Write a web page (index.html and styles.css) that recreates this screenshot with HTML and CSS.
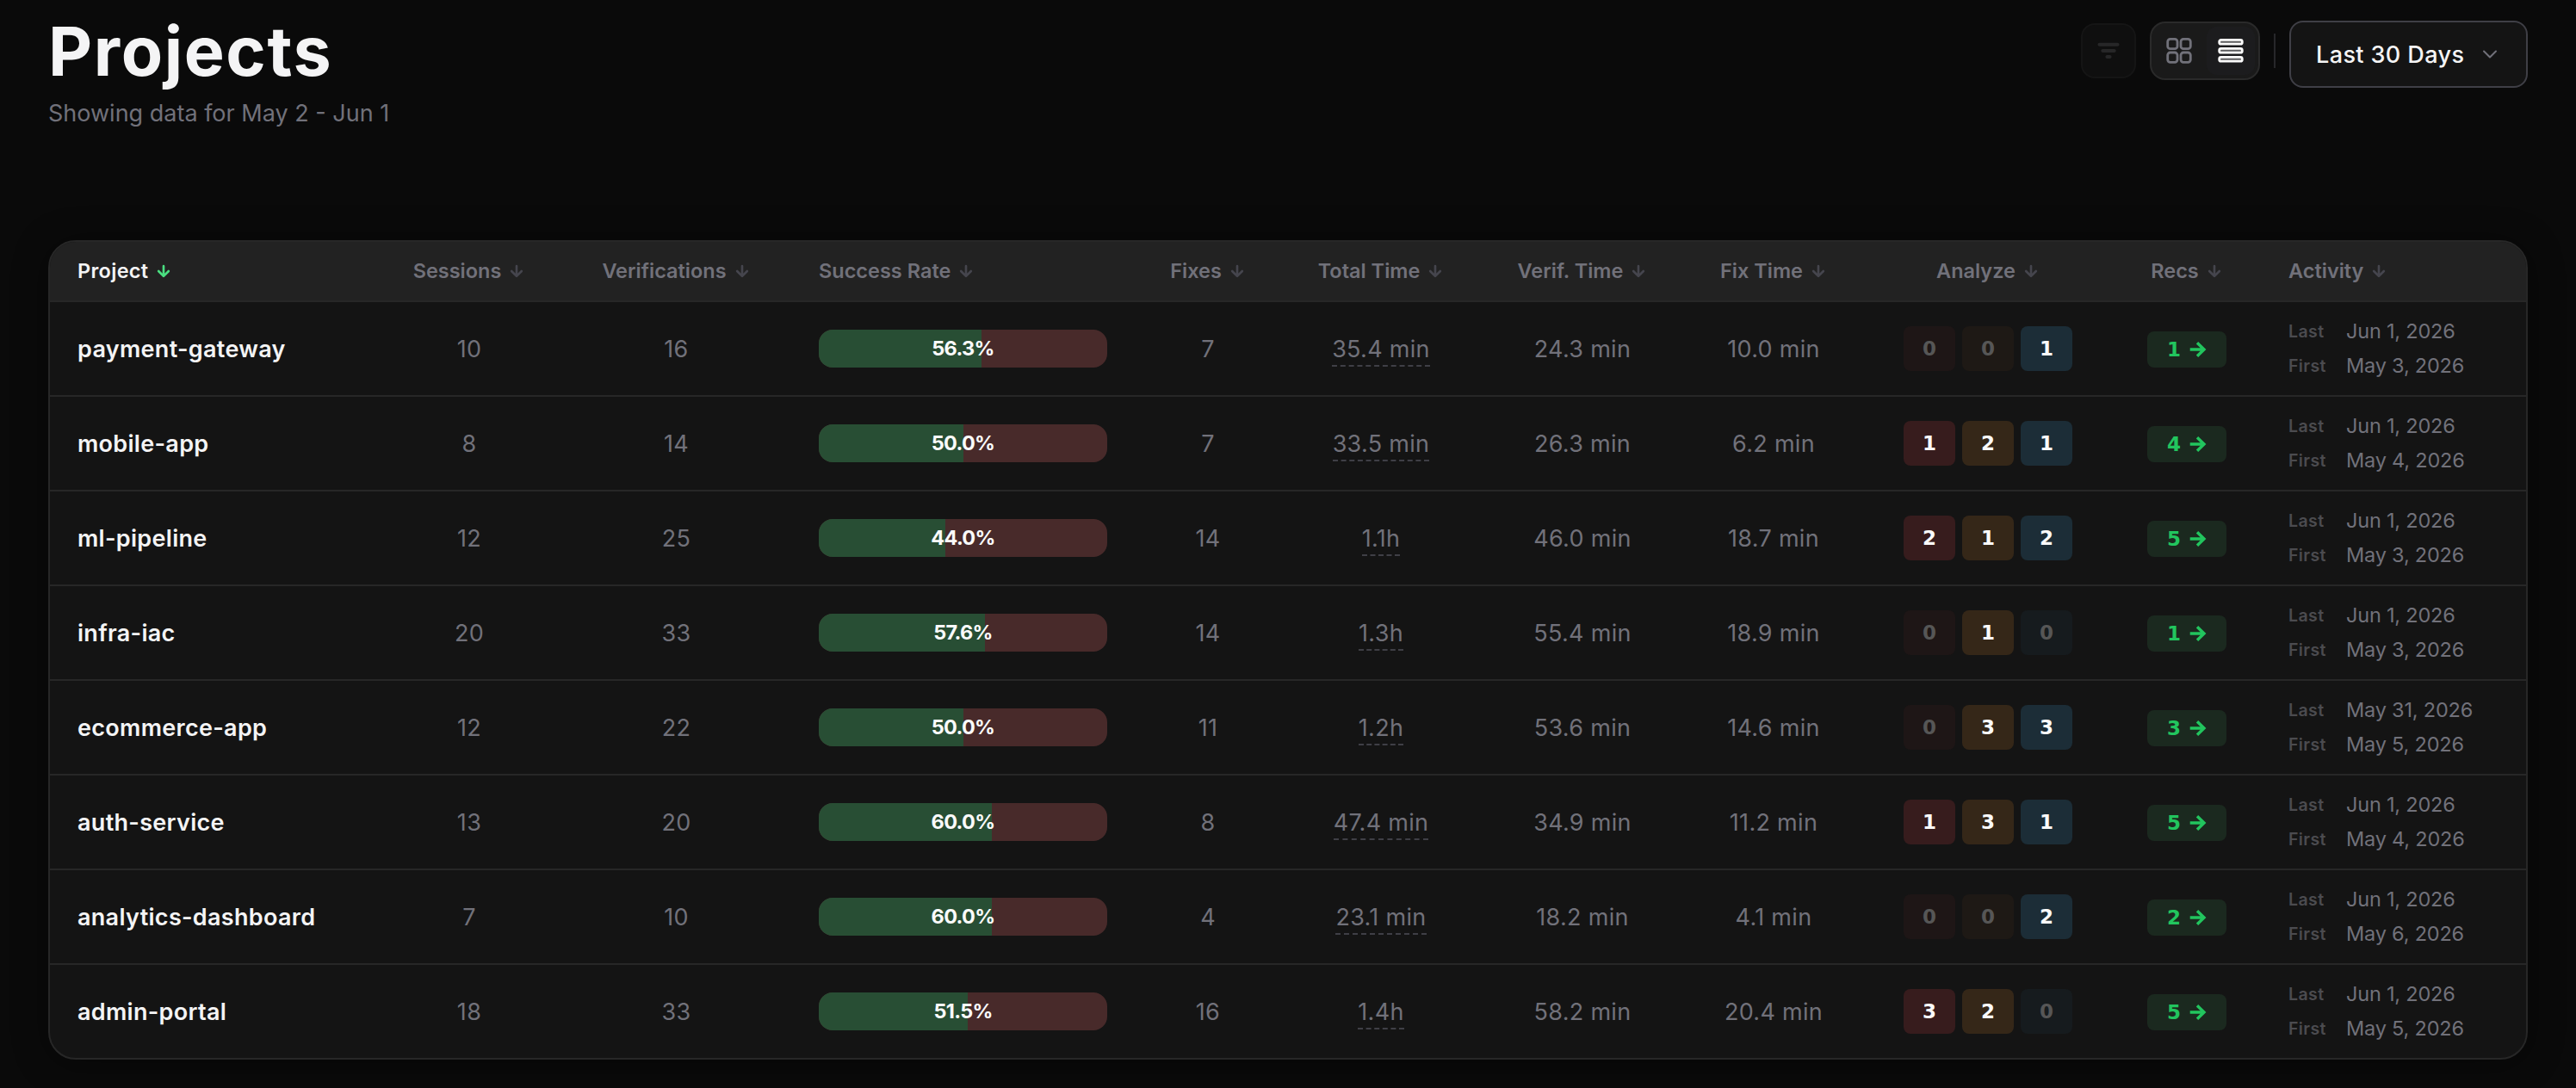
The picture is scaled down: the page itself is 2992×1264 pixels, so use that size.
FILE: index.html
```html
<!DOCTYPE html>
<html lang="en">
<head>
    <meta charset="UTF-8">
    <title>Projects</title>
    <link rel="stylesheet" href="styles.css">
</head>
<body>

<div class="page-header">
    <div>
        <h1>Projects</h1>
        <p class="subtitle">Showing data for May 2 - Jun 1</p>
    </div>
    <div class="toolbar">
        <div class="toolbar-group">
            <button class="filter-btn">
                <svg width="28" height="28" viewBox="0 0 28 28"><path d="M3.5 6.7h21M7.3 14h13.4M12.4 21h3.2"/></svg>
            </button>
            <div class="view-toggle">
                <button>
                    <svg width="32" height="32" viewBox="0 0 32 32">
                        <rect x="2.7" y="2.4" width="11.3" height="11.3" rx="3"/>
                        <rect x="18" y="2.4" width="11.3" height="11.3" rx="3"/>
                        <rect x="2.7" y="18" width="11.3" height="11.3" rx="3"/>
                        <rect x="18" y="18" width="11.3" height="11.3" rx="3"/>
                    </svg>
                </button>
                <button class="active">
                    <svg width="32" height="32" viewBox="0 0 32 32">
                        <rect x="2.7" y="3.4" width="26.6" height="4.8" rx="2"/>
                        <rect x="2.7" y="13.4" width="26.6" height="4.8" rx="2"/>
                        <rect x="2.7" y="23.4" width="26.6" height="4.8" rx="2"/>
                    </svg>
                </button>
            </div>
            <div class="separator"></div>
        </div>
        <button class="range-select">
            Last 30 Days
            <svg width="28" height="28" viewBox="0 0 24 24"><path d="m6 9 6 6 6-6"/></svg>
        </button>
    </div>
</div>

<div class="table-card">
    <table id="projects-table">
        <colgroup>
            <col class="c-project"><col class="c-sessions"><col class="c-verifications"><col class="c-rate"><col class="c-fixes">
            <col class="c-total"><col class="c-verif"><col class="c-fix"><col class="c-analyze"><col class="c-recs"><col class="c-activity">
        </colgroup>
        <thead>
            <tr>
                <th class="left sorted">Project</th>
                <th>Sessions</th>
                <th>Verifications</th>
                <th class="left">Success Rate</th>
                <th>Fixes</th>
                <th>Total Time</th>
                <th>Verif. Time</th>
                <th>Fix Time</th>
                <th>Analyze</th>
                <th>Recs</th>
                <th class="left">Activity</th>
            </tr>
        </thead>
        <tbody></tbody>
    </table>
</div>

<script>
    const projects = [
        { name: "payment-gateway", sessions: 10, verifications: 16, rate: "56.3", fixes: 7, total: "35.4 min", verif: "24.3 min", fix: "10.0 min", analyze: [0, 0, 1], recs: 1, last: "Jun 1, 2026", first: "May 3, 2026" },
        { name: "mobile-app", sessions: 8, verifications: 14, rate: "50.0", fixes: 7, total: "33.5 min", verif: "26.3 min", fix: "6.2 min", analyze: [1, 2, 1], recs: 4, last: "Jun 1, 2026", first: "May 4, 2026" },
        { name: "ml-pipeline", sessions: 12, verifications: 25, rate: "44.0", fixes: 14, total: "1.1h", verif: "46.0 min", fix: "18.7 min", analyze: [2, 1, 2], recs: 5, last: "Jun 1, 2026", first: "May 3, 2026" },
        { name: "infra-iac", sessions: 20, verifications: 33, rate: "57.6", fixes: 14, total: "1.3h", verif: "55.4 min", fix: "18.9 min", analyze: [0, 1, 0], recs: 1, last: "Jun 1, 2026", first: "May 3, 2026" },
        { name: "ecommerce-app", sessions: 12, verifications: 22, rate: "50.0", fixes: 11, total: "1.2h", verif: "53.6 min", fix: "14.6 min", analyze: [0, 3, 3], recs: 3, last: "May 31, 2026", first: "May 5, 2026" },
        { name: "auth-service", sessions: 13, verifications: 20, rate: "60.0", fixes: 8, total: "47.4 min", verif: "34.9 min", fix: "11.2 min", analyze: [1, 3, 1], recs: 5, last: "Jun 1, 2026", first: "May 4, 2026" },
        { name: "analytics-dashboard", sessions: 7, verifications: 10, rate: "60.0", fixes: 4, total: "23.1 min", verif: "18.2 min", fix: "4.1 min", analyze: [0, 0, 2], recs: 2, last: "Jun 1, 2026", first: "May 6, 2026" },
        { name: "admin-portal", sessions: 18, verifications: 33, rate: "51.5", fixes: 16, total: "1.4h", verif: "58.2 min", fix: "20.4 min", analyze: [3, 2, 0], recs: 5, last: "Jun 1, 2026", first: "May 5, 2026" }
    ];

    // Sort arrow in every header cell
    document.querySelectorAll("#projects-table th").forEach(th => {
        th.innerHTML = `<span class="th-label">${th.textContent}<svg width="20" height="20" viewBox="0 0 24 24"><path d="M12 5v14M19 12l-7 7-7-7"/></svg></span>`;
    });

    const levels = ["high", "medium", "low"];
    const tableBody = document.querySelector("#projects-table tbody");

    projects.forEach(p => {
        const row = document.createElement("tr");
        row.innerHTML = `
            <td class="name">${p.name}</td>
            <td>${p.sessions}</td>
            <td>${p.verifications}</td>
            <td><div class="rate-bar"><div class="rate-fill" style="width: ${p.rate}%"></div><span class="rate-text">${p.rate}%</span></div></td>
            <td>${p.fixes}</td>
            <td><span class="total">${p.total}</span></td>
            <td>${p.verif}</td>
            <td>${p.fix}</td>
            <td><div class="counts">${p.analyze.map((n, i) => `<span class="count ${levels[i]}${n ? "" : " empty"}">${n}</span>`).join("")}</div></td>
            <td><a class="recs">${p.recs}<svg width="20" height="18" viewBox="0 0 20 18"><path d="M0.7 9h16M9 1.2 17 9l-8 7.8"/></svg></a></td>
            <td><div class="activity"><span class="label">Last</span><span>${p.last}</span><span class="label">First</span><span>${p.first}</span></div></td>
        `;
        tableBody.appendChild(row);
    });
</script>

</body>
</html>
```
FILE: styles.css
```css
* {
    box-sizing: border-box;
}
body {
    margin: 0;
    padding: 19px 56px 0;
    height: 1264px;
    overflow: hidden;
    background-color: #0a0a0a;
    color: #71717a;
    font-family: Inter, "Liberation Sans", sans-serif;
    font-size: 27px;
}
button {
    display: flex;
    align-items: center;
    justify-content: center;
    padding: 0;
    border: none;
    background: none;
    color: inherit;
    font: inherit;
    cursor: pointer;
}
svg {
    display: block;
    flex: none;
    fill: none;
    stroke: currentColor;
    stroke-linecap: round;
    stroke-linejoin: round;
}

/* Header */
.page-header {
    display: flex;
    justify-content: space-between;
    height: 133px;
    margin-bottom: 127px;
}
h1 {
    margin: 0 0 13px;
    color: #f4f4f5;
    font-size: 79px;
    font-weight: 700;
    line-height: 80px;
    letter-spacing: 1.6px;
}
.subtitle {
    margin: 0;
    line-height: 40px;
}
.toolbar {
    display: flex;
    align-items: flex-start;
    gap: 16px;
    padding-top: 5px;
}
.toolbar-group {
    display: flex;
    align-items: center;
    gap: 16px;
    height: 70px;
}
.filter-btn {
    width: 64px;
    height: 64px;
    border: 2px solid #151515;
    border-radius: 16px;
    background-color: #0f0f0f;
    color: #272728;
}
.filter-btn svg {
    stroke-width: 4;
}
.view-toggle {
    display: flex;
    gap: 4px;
    padding: 4px;
    border: 2px solid #2a2a2a;
    border-radius: 18px;
    background-color: #1a1a1a;
}
.view-toggle button {
    width: 56px;
    height: 56px;
    border-radius: 12px;
}
.view-toggle svg {
    stroke-width: 2.8;
}
.view-toggle .active {
    background-color: #1c1c1e;
    color: #fafafa;
}
.view-toggle .active svg {
    fill: #5c5c5e;
}
.separator {
    width: 2px;
    height: 40px;
    background-color: #27272a;
}
.range-select {
    justify-content: space-between;
    width: 277px;
    height: 78px;
    padding: 0 28px 0 29px;
    border: 2px solid #3f3f46;
    border-radius: 16px;
    background-color: #141414;
    color: #f4f4f5;
    font-weight: 500;
    letter-spacing: 0.4px;
}
.range-select svg {
    color: #71717a;
    stroke-width: 1.7;
}

/* Table */
.table-card {
    overflow: hidden;
    border: 2px solid #272727;
    border-radius: 32px;
    background-color: #141414;
    box-shadow: 0 4px 40px rgba(0, 0, 0, 0.4);
}
table {
    width: 100%;
    table-layout: fixed;
    border-collapse: separate;
    border-spacing: 0;
}
.c-project { width: 380px; }
.c-sessions { width: 214px; }
.c-verifications { width: 267px; }
.c-rate { width: 399px; }
.c-fixes { width: 170px; }
.c-total { width: 232px; }
.c-verif { width: 236px; }
.c-fix { width: 208px; }
.c-analyze { width: 290px; }
.c-recs { width: 172px; }
.c-activity { width: 308px; }

th, td {
    padding: 0 32px;
    border-bottom: 2px solid #272727;
    text-align: center;
    white-space: nowrap;
}
th {
    height: 70px;
    padding-bottom: 3px;
    background-color: #222222;
    font-size: 23.5px;
    font-weight: 600;
    letter-spacing: 0;
}
th.left {
    text-align: left;
}
.th-label {
    display: inline-flex;
    align-items: center;
    gap: 8px;
    vertical-align: middle;
}
th svg {
    color: #45454d;
    stroke-width: 3.2;
}
th.sorted {
    color: #f4f4f5;
    letter-spacing: 0.3px;
}
th.sorted svg {
    color: #4ade80;
}
td {
    height: 110px;
    letter-spacing: 0.3px;
}
tr:last-child td {
    height: 108px;
    border-bottom: none;
}
td.name {
    color: #f4f4f5;
    font-weight: 600;
    letter-spacing: 0.3px;
    text-align: left;
}

.rate-bar {
    position: relative;
    height: 44px;
    overflow: hidden;
    border-radius: 16px;
    background-color: #482a2a;
}
.rate-fill {
    height: 100%;
    background-color: #284e34;
}
.rate-text {
    position: absolute;
    inset: 0;
    color: #fafafa;
    font-size: 23.5px;
    font-weight: 700;
    line-height: 43px;
    letter-spacing: -0.7px;
}
.total {
    padding-bottom: 2px;
    border-bottom: 2px dashed #3f3f46;
}

.counts {
    display: flex;
    justify-content: center;
    gap: 8px;
    margin: 0 -10px;
}
.count {
    width: 60px;
    border-radius: 8px;
    color: #fafafa;
    font: bold 23px/52px "DejaVu Sans", sans-serif;
    letter-spacing: 0;
}
.high { background-color: #371c1d; }
.medium { background-color: #352718; }
.low { background-color: #1c2d37; }
.empty { color: #565656; }
.high.empty { background-color: #1e1616; }
.medium.empty { background-color: #1e1915; }
.low.empty { background-color: #161b1e; }

.recs {
    display: flex;
    align-items: center;
    justify-content: center;
    gap: 10px;
    width: 92px;
    height: 42px;
    margin: 1px auto 0;
    border-radius: 8px;
    background-color: #1b291f;
    color: #22c55e;
    font: bold 23px "DejaVu Sans", sans-serif;
    letter-spacing: 0;
}
.recs svg {
    stroke-width: 3.4;
    stroke-linecap: butt;
    stroke-linejoin: miter;
}

.activity {
    display: grid;
    grid-template-columns: 67px auto;
    grid-auto-rows: 32px;
    row-gap: 8px;
    justify-content: start;
    font-size: 23.5px;
    line-height: 32px;
    letter-spacing: -0.2px;
    text-align: left;
}
.activity .label {
    color: #4b4b4f;
    font-size: 19.5px;
    font-weight: 600;
    letter-spacing: 0.4px;
}
```
